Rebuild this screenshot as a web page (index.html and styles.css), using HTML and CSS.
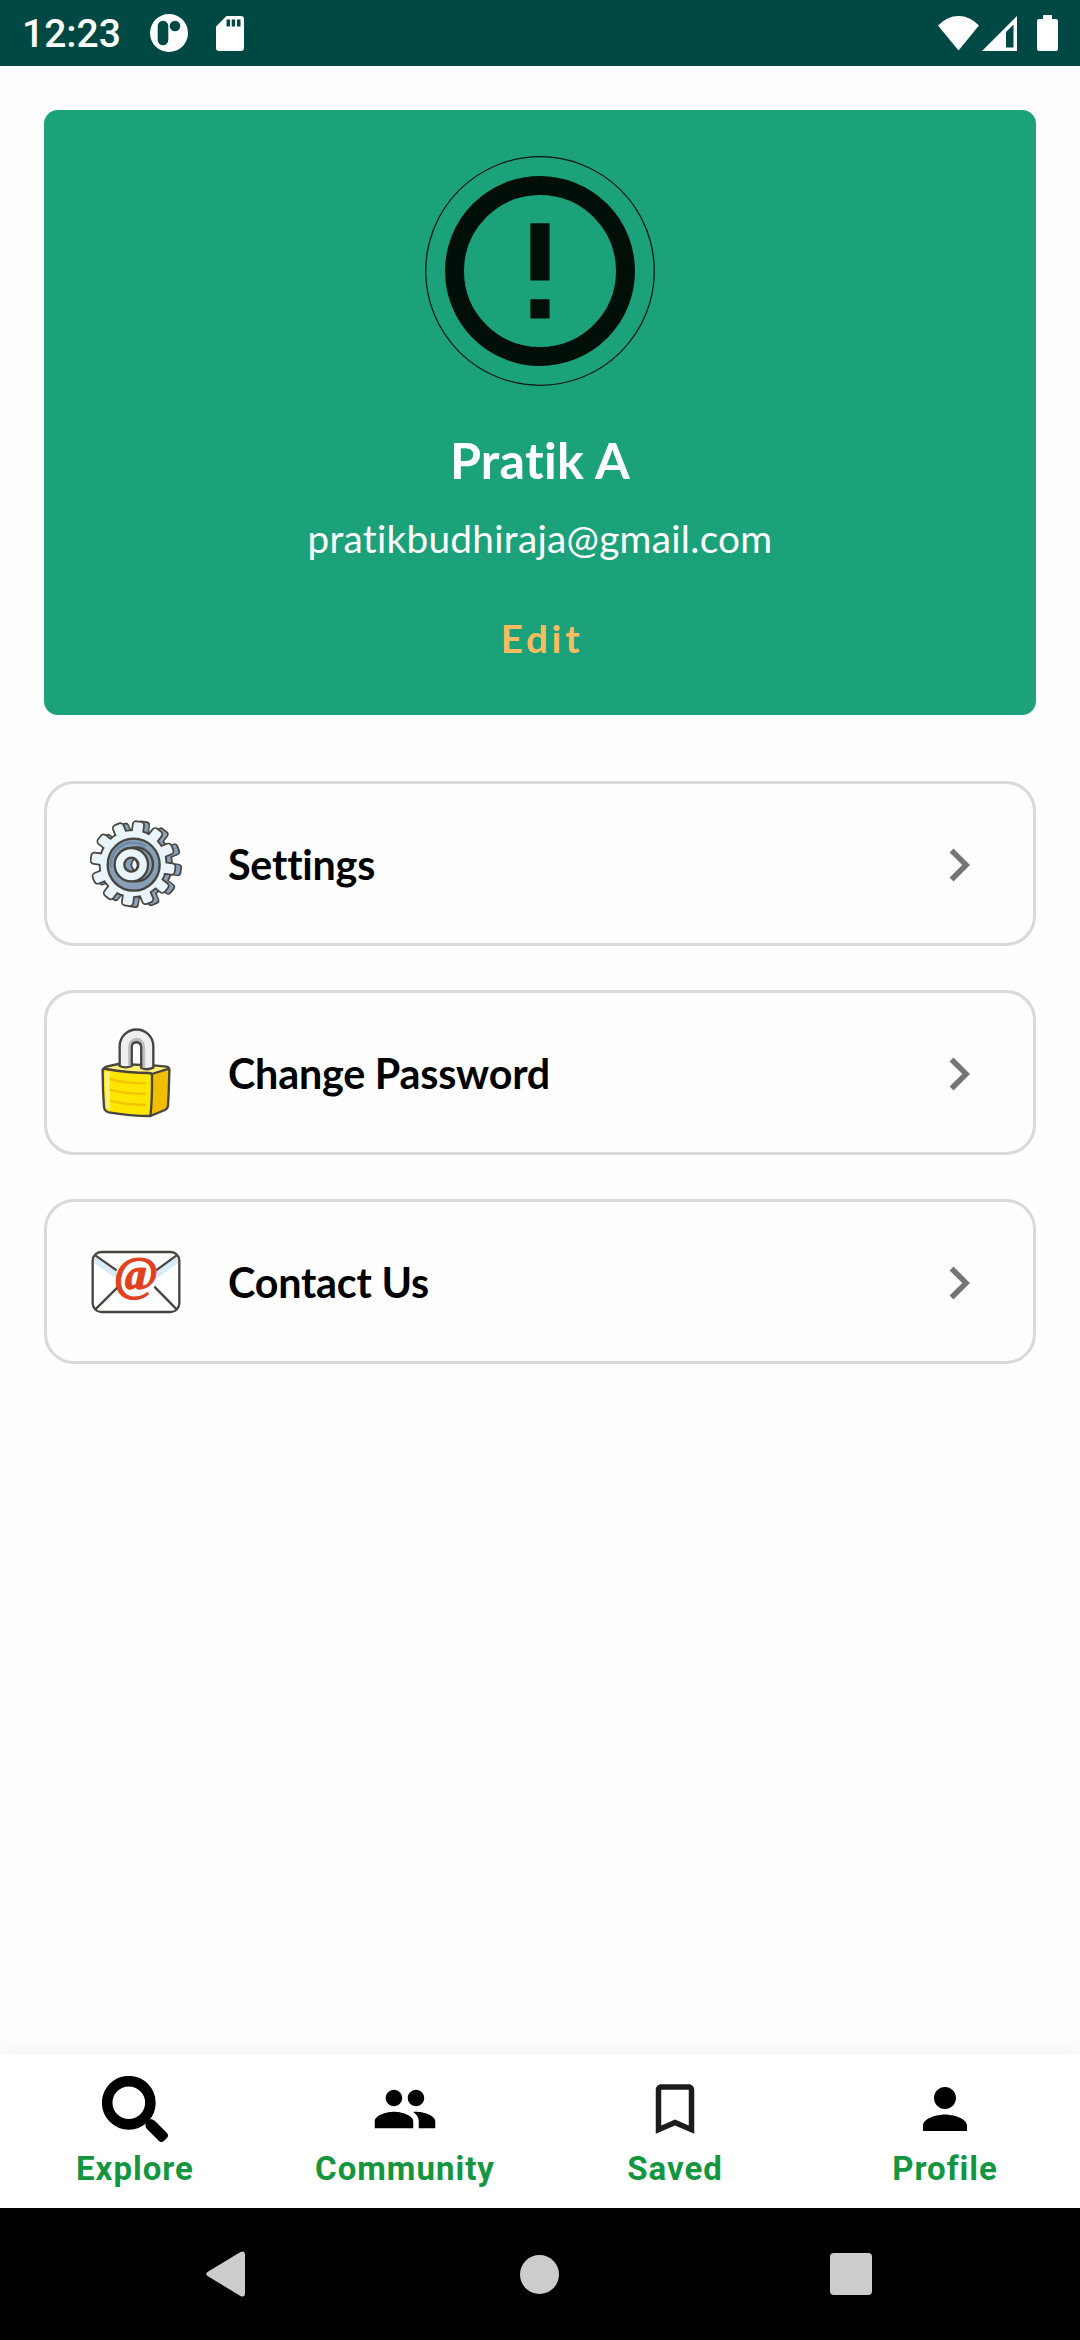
FILE: index.html
```html
<!DOCTYPE html>
<html lang="en">
<head>
<meta charset="utf-8">
<title>Profile</title>
<link rel="stylesheet" href="styles.css">
</head>
<body>
<div class="screen">
  <header class="status">
    <span class="clock">12:23</span>
    <svg class="status-app" viewBox="0 0 38 38"><path fill="#fff" fill-rule="evenodd" d="M19 0a19 19 0 1 1 0 38a19 19 0 1 1 0-38zM13 6.700a5.300 5.300 0 0 0-5.300 5.300v14a5.300 5.300 0 0 0 10.600 0V12a5.300 5.300 0 0 0-5.300-5.300zM25 6.700a5.300 5.300 0 1 0 0 10.600a5.300 5.300 0 1 0 0-10.600z"/></svg>
    <svg class="status-sd" viewBox="0 0 28 35"><path fill="#fff" fill-rule="evenodd" d="M10.500 0H25a3 3 0 0 1 3 3v29a3 3 0 0 1-3 3H3a3 3 0 0 1-3-3V10.500zM10.500 3.500v7h3.500v-7zM15.700 3.500v7h3.500v-7zM21 3.500v7h3.500v-7z"/></svg>
    <span class="spacer"></span>
    <svg class="status-wifi" viewBox="0 0 41 35"><path fill="#fff" d="M0 9.500Q9 0 20.500 0T41 9.500L20.500 34.500z"/></svg>
    <svg class="status-signal" viewBox="0 0 35 35"><path fill="#fff" fill-rule="evenodd" d="M35 0v35H0zM31.500 8.500L24 16v15.500h7.500z"/></svg>
    <svg class="status-battery" viewBox="0 0 21 36"><path fill="#fff" d="M6 0h9v4h4a2 2 0 0 1 2 2v28a2 2 0 0 1-2 2H2a2 2 0 0 1-2-2V6a2 2 0 0 1 2-2h4z"/></svg>
  </header>

  <main class="content">
    <section class="profile">
      <svg class="avatar" viewBox="0 0 230 230">
        <circle cx="115" cy="115" r="114.300" fill="none" stroke="#03150e" stroke-width="1.200"/>
        <circle cx="115" cy="115" r="85.500" fill="none" stroke="#010f09" stroke-width="19"/>
        <path fill="#010f09" d="M105.400 67.300h19.200v57.200h-19.200zM105.400 143.300h19.200v19.300h-19.200z"/>
      </svg>
      <h1 class="name">Pratik A</h1>
      <p class="email">pratikbudhiraja@gmail.com</p>
      <a class="edit">Edit</a>
    </section>

    <nav class="menu">
      <a class="row">
        <svg class="row-icon" viewBox="180 144 276 276">
          <defs>
            <rect id="tooth" x="-15" y="-130" width="30" height="45" rx="8"/>
            <g id="cog">
              <circle r="102"/>
              <use href="#tooth" transform="rotate(8)"/><use href="#tooth" transform="rotate(38)"/><use href="#tooth" transform="rotate(68)"/><use href="#tooth" transform="rotate(98)"/><use href="#tooth" transform="rotate(128)"/><use href="#tooth" transform="rotate(158)"/><use href="#tooth" transform="rotate(188)"/><use href="#tooth" transform="rotate(218)"/><use href="#tooth" transform="rotate(248)"/><use href="#tooth" transform="rotate(278)"/><use href="#tooth" transform="rotate(308)"/><use href="#tooth" transform="rotate(338)"/>
            </g>
          </defs>
          <g stroke-linejoin="round">
            <use href="#cog" transform="translate(325 283) scale(.98)" fill="#48443f" stroke="#48443f" stroke-width="8"/>
            <use href="#cog" transform="translate(325 283) scale(.97)" fill="#87a0b8"/>
            <use href="#cog" transform="translate(309 281) scale(.96)" fill="#48443f" stroke="#48443f" stroke-width="11"/>
            <use href="#cog" transform="translate(309 281) scale(.96)" fill="#e9f4fb"/>
          </g>
          <circle cx="311" cy="284" r="78" fill="#87a0b8" stroke="#48443f" stroke-width="7"/>
          <path d="M243 292a66 66 0 0 1 104-62" fill="none" stroke="#6f8ba5" stroke-width="8"/>
          <circle cx="318" cy="283" r="51" fill="#87a0b8" stroke="#48443f" stroke-width="7"/>
          <circle cx="304" cy="284" r="50" fill="#e9f4fb" stroke="#48443f" stroke-width="7"/>
          <circle cx="304" cy="284" r="21" fill="#87a0b8" stroke="#48443f" stroke-width="7"/>
          <path d="M313 266q-18 18 0 36q20-16 0-36z" fill="#e9f4fb" stroke="#48443f" stroke-width="5"/>
        </svg>
        <span class="row-label">Settings</span>
        <svg class="chevron" viewBox="0 0 24 24"><path d="M10 6L8.590 7.410 13.170 12l-4.580 4.590L10 18l6-6z"/></svg>
      </a>
      <a class="row">
        <svg class="row-icon" viewBox="60 81 276 276">
          <g stroke="#48443f" stroke-width="7" stroke-linejoin="round">
            <path fill="#fff07a" d="M98 210Q100 203 112 199L145 192L250 196L290 200Q299 202 298 213L245 224Z"/>
            <path fill="#f1bd00" d="M245 222L290 208Q298 205 298 214Q297 270 294 318Q293 326 285 330L241 348Z"/>
            <path fill="#ffe600" d="M98 213Q98 206 108 207Q175 219 238 219Q246 219 246 228Q247 300 241 348Q180 348 116 337Q104 334 102 322Q98 270 98 213Z"/>
          </g>
          <path d="M104 214Q104 280 109 325L122 331Q117 270 120 216Z" fill="#fff07a"/>
          <path d="M119 237Q170 251 228 250M119 269Q170 283 228 281M119 301Q170 316 228 314" fill="none" stroke="#f5c400" stroke-width="7"/>
          <path d="M149 198V139a50 50 0 0 1 101 0V203Q232 212 214 204V142Q214 127 199 127T185 142V198Q167 206 149 198Z" fill="#efefef" stroke="#48443f" stroke-width="7"/>
          <path d="M179 197V144Q180 120 199 118Q219 119 221 144V203" fill="none" stroke="#bdbdc0" stroke-width="9"/>
          <path d="M185 199V142Q185 126 199 126T214 142V204" fill="none" stroke="#48443f" stroke-width="6"/>
        </svg>
        <span class="row-label">Change Password</span>
        <svg class="chevron" viewBox="0 0 24 24"><path d="M10 6L8.590 7.410 13.170 12l-4.580 4.590L10 18l6-6z"/></svg>
      </a>
      <a class="row">
        <svg class="row-icon" viewBox="60 78 276 276">
          <rect x="68" y="126" width="260" height="180" rx="26" fill="#fff"/>
          <path d="M72 138L140 183V207L72 159ZM324 138L256 183V207L324 159Z" fill="#d8ebf7"/>
          <path d="M76 136L140 181M320 136L258 181M76 298L142 233M320 298L253 230" stroke="#48443f" stroke-width="7" fill="none"/>
          <rect x="68" y="126" width="260" height="180" rx="26" fill="none" stroke="#48443f" stroke-width="7"/>
          <text class="at" x="198" y="239" text-anchor="middle">@</text>
        </svg>
        <span class="row-label">Contact Us</span>
        <svg class="chevron" viewBox="0 0 24 24"><path d="M10 6L8.590 7.410 13.170 12l-4.580 4.590L10 18l6-6z"/></svg>
      </a>
    </nav>
  </main>

  <nav class="tabs">
    <a class="tab">
      <svg class="tab-icon" viewBox="0 0 66 66"><circle cx="26.800" cy="26.800" r="21.600" fill="none" stroke="#000" stroke-width="10.600"/><path d="M43.500 49.500V45.500L46 43.300H50L53 45L65 57Q67 59.500 65 62L61.500 65.200Q59.500 67 57 65L45 53Q43.500 51.500 43.500 49.500Z"/></svg>
      <span>Explore</span>
    </a>
    <a class="tab">
      <svg class="tab-icon" viewBox="0 0 24 24"><path d="M16 11c1.660 0 2.990-1.340 2.990-3S17.660 5 16 5s-3 1.340-3 3 1.340 3 3 3zm-8 0c1.660 0 2.990-1.340 2.990-3S9.660 5 8 5 5 6.340 5 8s1.340 3 3 3zm0 2c-2.330 0-7 1.170-7 3.500V19h14v-2.500c0-2.330-4.670-3.500-7-3.500zm8 0c-.290 0-.620.020-.970.050 1.160.840 1.970 1.970 1.970 3.450V19h6v-2.500c0-2.330-4.670-3.500-7-3.500z"/></svg>
      <span>Community</span>
    </a>
    <a class="tab">
      <svg class="tab-icon" viewBox="0 0 24 24"><path fill="#1c1c1c" d="M17 3H7c-1.100 0-2 .9-2 2v16l7-3 7 3V5c0-1.100-.9-2-2-2zm0 15l-5-2.180L7 18V5h10z"/></svg>
      <span>Saved</span>
    </a>
    <a class="tab">
      <svg class="tab-icon" viewBox="0 0 24 24"><path d="M12 12c2.210 0 4-1.790 4-4s-1.790-4-4-4-4 1.790-4 4 1.790 4 4 4zm0 2c-2.670 0-8 1.340-8 4v2h16v-2c0-2.660-5.330-4-8-4z"/></svg>
      <span>Profile</span>
    </a>
  </nav>

  <footer class="system">
    <svg class="sys-back" viewBox="0 0 39 46"><path fill="#ccc" d="M1.500 21L34.500 1Q39 -1 39 4V42Q39 47 34.500 45L1.500 25Q-1 23 1.500 21Z"/></svg>
    <span class="sys-home"></span>
    <span class="sys-recent"></span>
  </footer>
</div>
</body>
</html>
```
FILE: styles.css
```css
* { box-sizing: border-box; margin: 0; padding: 0; }
body { background: #fefefe; }
svg { display: block; flex: none; }

.screen {
  width: 1080px;
  height: 2340px;
  display: flex;
  flex-direction: column;
  background: #fefefe;
  font-family: Lato, sans-serif;
  font-variant-ligatures: none;
  overflow: hidden;
}

.status {
  height: 66px;
  padding: 0 22px;
  display: flex;
  align-items: center;
  background: #004843;
  color: #fff;
}
.clock {
  width: 128px;
  padding-top: 2px;
  font: 500 39px/66px Roboto, sans-serif;
}
.spacer { flex: 1; }
.status-app { width: 38px; height: 38px; }
.status-sd { width: 28px; height: 35px; margin-left: 28px; }
.status-wifi { width: 41px; height: 35px; }
.status-signal { width: 35px; height: 35px; margin-left: 3px; }
.status-battery { width: 21px; height: 36px; margin-left: 20px; }

.content { flex: 1; padding: 44px; }

.profile {
  height: 605px;
  padding-top: 46px;
  display: flex;
  flex-direction: column;
  align-items: center;
  background: #1ca27a;
  border-radius: 14px;
  color: #fff;
}
.avatar { width: 230px; height: 230px; }
.name { margin-top: 44px; font-size: 50.2px; line-height: 60px; font-weight: 700; letter-spacing: .3px; }
.email { margin-top: 25px; font-size: 38.7px; line-height: 46px; letter-spacing: .3px; }
.edit {
  margin-top: 54px;
  padding-left: 4px;
  font-size: 38.5px;
  line-height: 46px;
  font-weight: 700;
  letter-spacing: 3.8px;
  color: #f9bc60;
}

.menu { margin-top: 66px; display: flex; flex-direction: column; gap: 44px; }
.row {
  height: 165px;
  padding: 0 41px 0 43px;
  display: flex;
  align-items: center;
  border: 3px solid #d9d9d9;
  border-radius: 30px;
  color: #000;
}
.row-icon { width: 92px; height: 92px; }
.row-label {
  flex: 1;
  margin-left: 46px;
  padding-top: 1px;
  font-size: 41.25px;
  line-height: 50px;
  font-weight: 700;
  letter-spacing: -.2px;
}
.chevron { width: 66px; height: 66px; margin-top: 3px; fill: #757575; }
.at {
  font: 700 144px "Liberation Serif", serif;
  fill: #e2401f;
  stroke: #e2401f;
  stroke-width: 3px;
}

.tabs {
  height: 154px;
  padding-top: 22px;
  display: grid;
  grid-template-columns: repeat(4, 1fr);
  background: #fff;
  box-shadow: 0 0 22px rgba(0, 0, 0, .08);
}
.tab {
  display: flex;
  flex-direction: column;
  align-items: center;
  gap: 7px;
  font: 700 33px/40px Roboto, sans-serif;
  letter-spacing: 1px;
  color: #149640;
}
.tab-icon { width: 66px; height: 66px; fill: #000; }

.system {
  height: 132px;
  padding: 0 208px 0 206px;
  display: grid;
  grid-template-columns: 1fr 39px 1fr;
  align-items: center;
  background: #000;
}
.sys-back { width: 39px; height: 46px; }
.sys-home { width: 39px; height: 39px; border-radius: 50%; background: #ccc; }
.sys-recent { width: 42px; height: 42px; justify-self: end; border-radius: 4px; background: #ccc; }
```
